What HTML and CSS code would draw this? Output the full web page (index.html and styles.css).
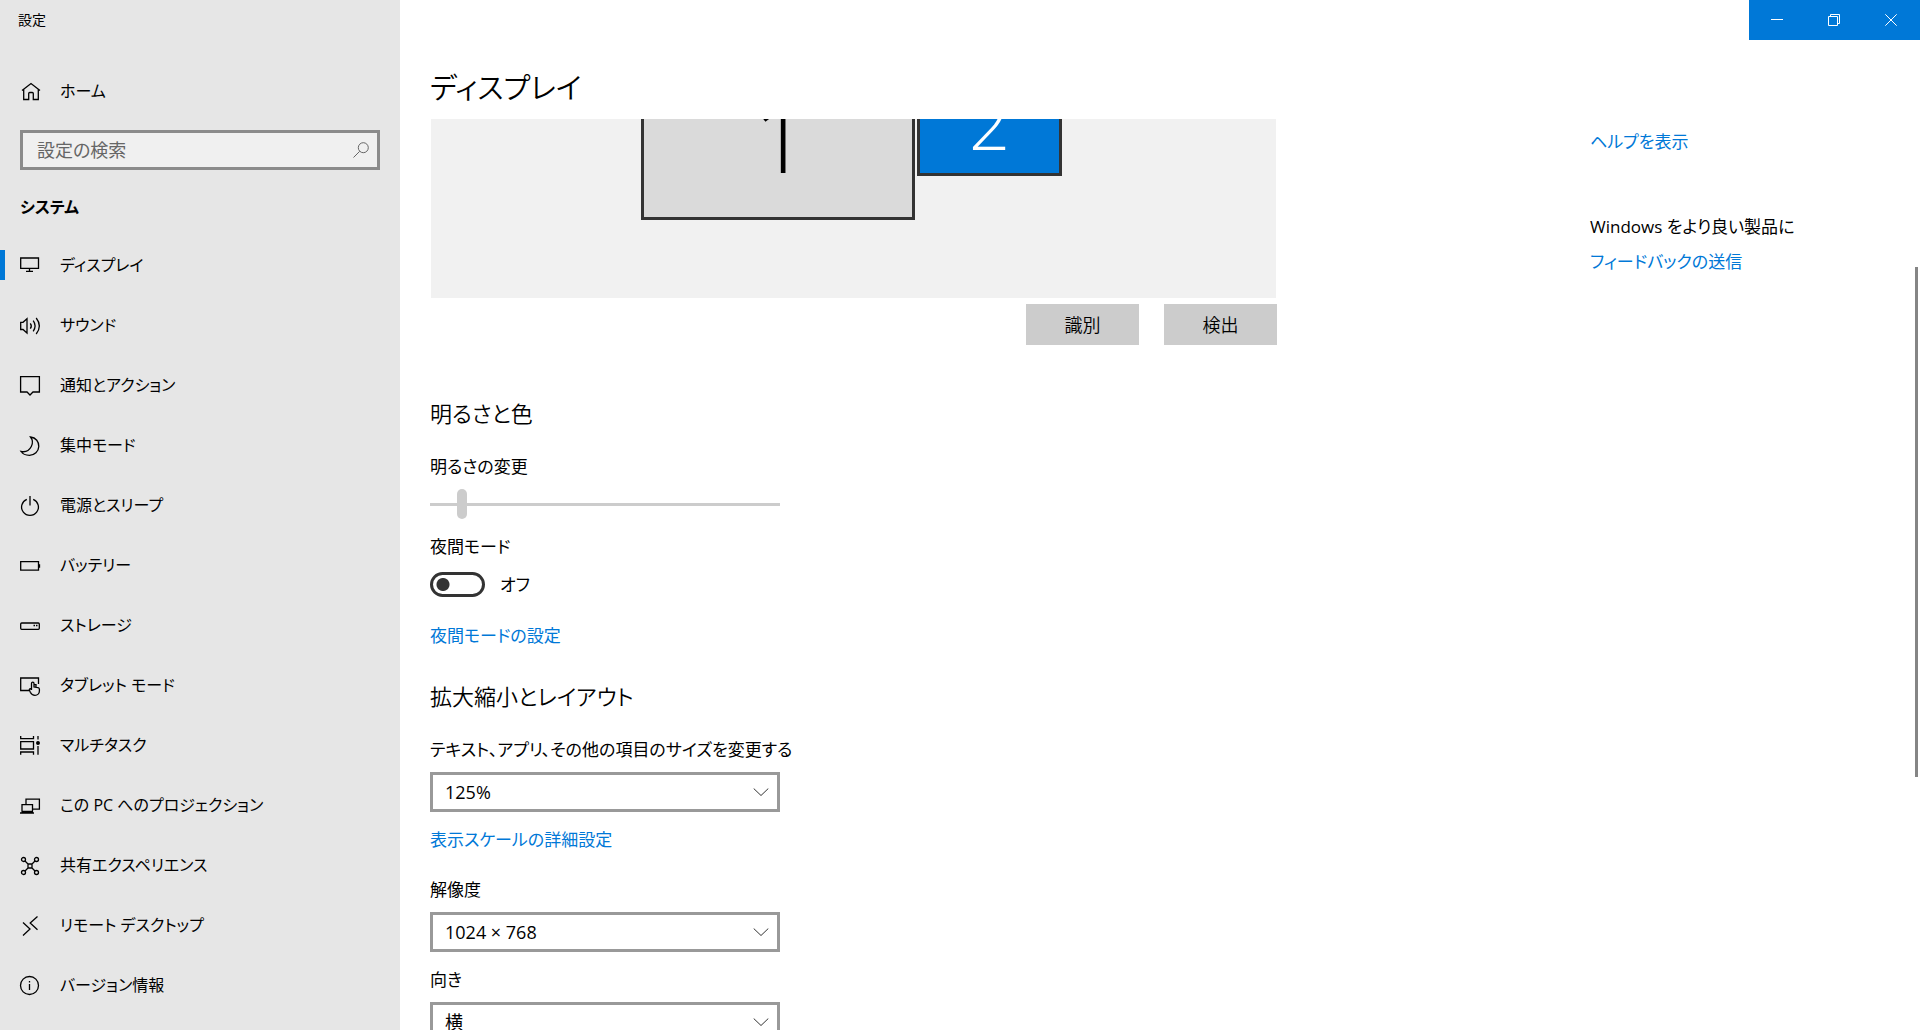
FILE: index.html
```html
<!DOCTYPE html>
<html lang="ja">
<head>
<meta charset="utf-8">
<meta name="viewport" content="width=device-width, initial-scale=1">
<title>設定</title>
<link rel="stylesheet" href="styles.css">
</head>
<body>
<div class="window">
  <aside class="sidebar">
    <p class="window-title">設定</p>
    <a class="nav-item home" href="#">
      <svg class="icon" viewBox="0 0 20 20" aria-hidden="true"><path d="M2 9.500 11 2.500 20 9.500M3.700 8.500V18.500H8.700V12.500Q8.700 11.500 9.700 11.500H12.300Q13.300 11.500 13.300 12.500V18.500H18.300V8.500"/></svg>
      <span>ホーム</span>
    </a>
    <div class="search">
      <input class="search-input" type="search" placeholder="設定の検索" aria-label="設定の検索">
      <svg class="search-icon" viewBox="0 0 16 16" aria-hidden="true"><circle cx="10.300" cy="5.700" r="5"/><path d="M6.700 9.300.5 15.500"/></svg>
    </div>
    <h2 class="group-title">システム</h2>
    <nav class="nav">
      <a class="nav-item is-active" href="#" aria-current="page">
        <svg class="icon" viewBox="0 0 20 20" aria-hidden="true"><path d="M.7 3H18.500V13.300H.7ZM9.500 13.300V16M6 16.300H13"/></svg>
        <span>ディスプレイ</span>
      </a>
      <a class="nav-item" href="#">
        <svg class="icon" viewBox="0 0 20 20" aria-hidden="true"><path d="M.7 7.300H3L7 3.700V18L3 14.500H.7ZM10.300 8.300Q12.300 11 10.300 13.700M13.200 5.700Q17 11 13.200 16.300M16.200 3Q22.500 11 16.200 19"/></svg>
        <span>サウンド</span>
      </a>
      <a class="nav-item" href="#">
        <svg class="icon" viewBox="0 0 20 20" aria-hidden="true"><path d="M.6 1.600H19.400V17H13L10 20 7 17H.6Z"/></svg>
        <span>通知とアクション</span>
      </a>
      <a class="nav-item" href="#">
        <svg class="icon" viewBox="0 0 20 20" aria-hidden="true"><path d="M10.500 2C16 2.500 19 7 18.800 11.500 18.500 16.500 14.500 20.300 9.500 20.300 5.500 20.300 2.300 18.500 1 16.500 6 17.500 9.500 15 11.300 11.500 12.800 8.500 12.500 4.500 10.500 2Z"/></svg>
        <span>集中モード</span>
      </a>
      <a class="nav-item" href="#">
        <svg class="icon" viewBox="0 0 20 20" aria-hidden="true"><path d="M10 1V10.500M6.800 4.300A8.400 8.400 0 1 0 13.200 4.300"/></svg>
        <span>電源とスリープ</span>
      </a>
      <a class="nav-item" href="#">
        <svg class="icon" viewBox="0 0 20 20" aria-hidden="true"><path d="M.7 6.700H18.500V15.200H.7ZM19.500 9.300V12.700"/></svg>
        <span>バッテリー</span>
      </a>
      <a class="nav-item" href="#">
        <svg class="icon" viewBox="0 0 20 20" aria-hidden="true"><rect x=".7" y="8" width="18.600" height="6.300" rx="1"/><path d="M13.500 10.500H15M16 10.500H17.500"/></svg>
        <span>ストレージ</span>
      </a>
      <a class="nav-item" href="#">
        <svg class="icon" viewBox="0 0 20 20" aria-hidden="true"><path d="M9 15.500H.7V3H18.500V9M11.500 15V8.500C11.500 6.700 14 6.700 14 8.500V12L18 12.600C19 12.800 19.400 13.300 19.400 14.300V16C19.400 18.500 17.500 20.300 15 20.300 12.500 20.300 11.300 19.300 10.300 17.300L9.200 14.800C9.500 13.300 11 13.500 11.500 14.800M14 9.500 16 9.700V12"/></svg>
        <span>タブレット モード</span>
      </a>
      <a class="nav-item" href="#">
        <svg class="icon" viewBox="0 0 20 20" aria-hidden="true"><path d="M.7 1V3.600H13.500V1M.7 6.700H13.500V14H.7ZM.7 19.700V17H13.500V19.700M18 1V4.500M18 11V19.700"/><circle class="solid" cx="18" cy="8" r="1.300"/></svg>
        <span>マルチタスク</span>
      </a>
      <a class="nav-item" href="#">
        <svg class="icon" viewBox="0 0 20 20" aria-hidden="true"><path d="M6 9V4.200H19.400V14.200H13M2 16.500V9.700H12.500V16.500M0 18H14M1.500 16.500H13"/></svg>
        <span>この PC へのプロジェクション</span>
      </a>
      <a class="nav-item" href="#">
        <svg class="icon" viewBox="0 0 20 20" aria-hidden="true"><circle cx="3.500" cy="4.500" r="2"/><circle cx="16.500" cy="4.500" r="2"/><circle cx="3.500" cy="17.500" r="2"/><circle cx="16.500" cy="17.500" r="2"/><path d="M8 9H12V13H8ZM5 6 8 9M15 6 12 9M5 16 8 13M15 16 12 13"/></svg>
        <span>共有エクスペリエンス</span>
      </a>
      <a class="nav-item" href="#">
        <svg class="icon" viewBox="0 0 20 20" aria-hidden="true"><path d="M17.500 1.500 10.200 8 17.500 14.700M3 7.500 10 14 3 20.500"/></svg>
        <span>リモート デスクトップ</span>
      </a>
      <a class="nav-item" href="#">
        <svg class="icon" viewBox="0 0 20 20" aria-hidden="true"><circle cx="9.500" cy="10.500" r="9"/><path d="M9.500 9V15M9.500 6V7.500"/></svg>
        <span>バージョン情報</span>
      </a>
    </nav>
  </aside>

  <main class="main">
    <header class="titlebar">
      <button class="caption-button" type="button" aria-label="最小化"><svg class="caption-icon" viewBox="0 0 12 12"><path d="M0 5.500H12"/></svg></button>
      <button class="caption-button" type="button" aria-label="元に戻す"><svg class="caption-icon" viewBox="0 0 12 12"><path d="M.5 2.500H9.500V11.500H.5ZM2.500 2.500V.5H11.500V9.500H9.500"/></svg></button>
      <button class="caption-button" type="button" aria-label="閉じる"><svg class="caption-icon" viewBox="0 0 12 12"><path d="M.3.300 11.700 11.700M11.700.3.300 11.700"/></svg></button>
    </header>
    <h1 class="page-title">ディスプレイ</h1>
    <div class="columns">
      <div class="settings">
        <div class="display-map">
          <div class="monitor monitor-1">1</div>
          <div class="monitor monitor-2">2</div>
        </div>
        <div class="map-actions">
          <button class="button" type="button">識別</button>
          <button class="button" type="button">検出</button>
        </div>

        <section class="section">
          <h2 class="section-title">明るさと色</h2>
          <div class="field">
            <label class="label" for="brightness">明るさの変更</label>
            <input class="slider" id="brightness" type="range" min="0" max="100" value="8" disabled>
          </div>
          <div class="field night">
            <span class="label" id="night-label">夜間モード</span>
            <label class="toggle-row"><input class="toggle" type="checkbox" role="switch" aria-labelledby="night-label">オフ</label>
          </div>
          <a class="link night-link" href="#">夜間モードの設定</a>
        </section>

        <section class="section">
          <h2 class="section-title">拡大縮小とレイアウト</h2>
          <div class="field">
            <label class="label" for="scale">テキスト、アプリ、その他の項目のサイズを変更する</label>
            <div class="select-box">
              <select class="select" id="scale"><option>125%</option></select>
              <svg class="chevron" viewBox="0 0 16 8" aria-hidden="true"><path d="M.7.500 8 7.500 15.300.5"/></svg>
            </div>
          </div>
          <a class="link scale-link" href="#">表示スケールの詳細設定</a>
          <div class="field">
            <label class="label" for="resolution">解像度</label>
            <div class="select-box">
              <select class="select" id="resolution"><option>1024 × 768</option></select>
              <svg class="chevron" viewBox="0 0 16 8" aria-hidden="true"><path d="M.7.500 8 7.500 15.300.5"/></svg>
            </div>
          </div>
          <div class="field direction">
            <label class="label" for="orientation">向き</label>
            <div class="select-box">
              <select class="select" id="orientation"><option>横</option></select>
              <svg class="chevron" viewBox="0 0 16 8" aria-hidden="true"><path d="M.7.500 8 7.500 15.300.5"/></svg>
            </div>
          </div>
        </section>
      </div>

      <aside class="related">
        <a class="link" href="#">ヘルプを表示</a>
        <div class="feedback">
          <p class="feedback-title">Windows をより良い製品に</p>
          <a class="link" href="#">フィードバックの送信</a>
        </div>
      </aside>
    </div>
    <div class="scroll-thumb"></div>
  </main>
</div>
</body>
</html>
```
FILE: styles.css
```css
* {
  box-sizing: border-box;
}

body,
h1,
h2,
p {
  margin: 0;
}

body {
  background: #fff;
  color: #000;
  font: 400 17px/24px "Open Sans", "Noto Sans CJK JP", sans-serif;
  font-feature-settings: "palt";
}

button,
input,
select {
  color: inherit;
  font: inherit;
  font-feature-settings: inherit;
}

.window {
  display: flex;
  height: 100vh;
  overflow: hidden;
}

/* Sidebar */

.sidebar {
  flex: 0 0 400px;
  background: #e6e6e6;
  overflow: hidden;
}

.window-title {
  padding: 8px 18px;
  font-size: 14px;
}

.nav-item {
  display: flex;
  align-items: center;
  gap: 20px;
  height: 60px;
  padding-left: 20px;
  color: inherit;
  font-size: 16px;
  text-decoration: none;
}

.home {
  margin-top: 21px;
}

.is-active {
  background: linear-gradient(#0078d7, #0078d7) 0 50% / 5px 30px no-repeat;
}

.icon {
  width: 20px;
  height: 20px;
  overflow: visible;
  fill: none;
  stroke: currentColor;
  stroke-width: 1.3;
}

.solid {
  fill: currentColor;
}

.search {
  position: relative;
  margin: 9px 20px 0;
}

.search-input {
  display: block;
  width: 100%;
  height: 40px;
  padding: 0 44px 0 14px;
  border: 3px solid #8b8b8b;
  border-radius: 0;
  background: #f0f0f0;
  font-size: 18px;
  appearance: none;
}

.search-input::placeholder {
  color: #666;
  opacity: 1;
}

.search-icon {
  position: absolute;
  top: 12px;
  right: 11px;
  width: 16px;
  height: 16px;
  fill: none;
  stroke: #666;
}

.group-title {
  margin: 25px 20px 0;
  font-size: 16px;
  font-weight: 700;
}

.nav {
  margin-top: 16px;
}

/* Main area */

.main {
  position: relative;
  flex: 1;
  min-width: 0;
  padding-left: 30px;
}

.titlebar {
  display: flex;
  justify-content: flex-end;
  height: 40px;
}

.caption-button {
  display: grid;
  place-items: center;
  width: 57px;
  padding: 0 1px 0 0;
  border: 0;
  background: #0078d7;
  color: #fff;
}

.caption-icon {
  width: 12px;
  height: 12px;
  fill: none;
  stroke: currentColor;
}

.page-title {
  padding: 24px 0 7px;
  font-size: 29px;
  font-weight: 350;
  line-height: 48px;
}

.columns {
  display: flex;
  justify-content: space-between;
  gap: 40px;
}

.settings {
  flex: 0 1 847px;
  min-width: 0;
}

.display-map {
  position: relative;
  height: 179px;
  margin: 0 1px;
  overflow: hidden;
  background: #f1f1f1;
}

.monitor {
  position: absolute;
  display: grid;
  place-items: center;
  border: 3px solid #333;
  font-weight: 300;
  line-height: 1;
}

.monitor-1 {
  left: 210px;
  bottom: 78px;
  width: 274px;
  height: 168px;
  padding-left: 6px;
  background: #dadada;
  font-size: 96px;
}

.monitor-2 {
  left: 486px;
  bottom: 122px;
  width: 145px;
  height: 108px;
  background: #0078d7;
  color: #fff;
  font-size: 72px;
}

.map-actions {
  display: flex;
  justify-content: flex-end;
  gap: 25px;
  margin-top: 6px;
}

.button {
  width: 113px;
  height: 41px;
  padding: 0;
  border: 0;
  background: #ccc;
  font-size: 18px;
  font-weight: 350;
}

.section {
  display: flex;
  flex-direction: column;
  align-items: flex-start;
}

.section-title {
  margin: 31px 0 25px;
  font-size: 22px;
  font-weight: 350;
  line-height: 34px;
}

.map-actions + .section .section-title {
  margin-top: 51px;
}

.field {
  display: flex;
  flex-direction: column;
  gap: 10px;
}

.slider {
  width: 350px;
  height: 30px;
  margin: 0;
  background: linear-gradient(#ccc, #ccc) 0 50% / 100% 3px no-repeat;
  appearance: none;
}

.slider::-webkit-slider-thumb {
  width: 10px;
  height: 30px;
  border-radius: 5px;
  background: #ccc;
  appearance: none;
}

.slider::-moz-range-thumb {
  width: 10px;
  height: 30px;
  border: 0;
  border-radius: 5px;
  background: #ccc;
}

.night {
  gap: 13px;
  margin-top: 16px;
}

.toggle-row {
  display: flex;
  align-items: center;
  gap: 15px;
}

.toggle {
  width: 55px;
  height: 25px;
  margin: 0;
  border: 3px solid #333;
  border-radius: 13px;
  background: radial-gradient(circle at 10px 50%, #333 6px, transparent 7px);
  appearance: none;
}

.link {
  color: #0078d7;
  text-decoration: none;
}

.night-link {
  margin-top: 27px;
}

.select-box {
  position: relative;
  width: 350px;
}

.select {
  display: block;
  width: 100%;
  height: 40px;
  padding: 0 40px 0 12px;
  border: 3px solid #999;
  border-radius: 0;
  background: #fff;
  font-size: 18px;
  appearance: none;
}

.chevron {
  position: absolute;
  top: 16px;
  right: 11px;
  width: 16px;
  height: 8px;
  fill: none;
  stroke: #333;
  pointer-events: none;
}

.scale-link {
  margin: 16px 0 26px;
}

.direction {
  margin-top: 16px;
}

/* Related links */

.related {
  flex: 0 0 330px;
  padding-top: 11px;
}

.feedback {
  margin-top: 61px;
}

.feedback-title {
  margin-bottom: 11px;
}

.scroll-thumb {
  position: absolute;
  top: 267px;
  right: 2px;
  width: 3px;
  height: 510px;
  background: #858585;
}
```
